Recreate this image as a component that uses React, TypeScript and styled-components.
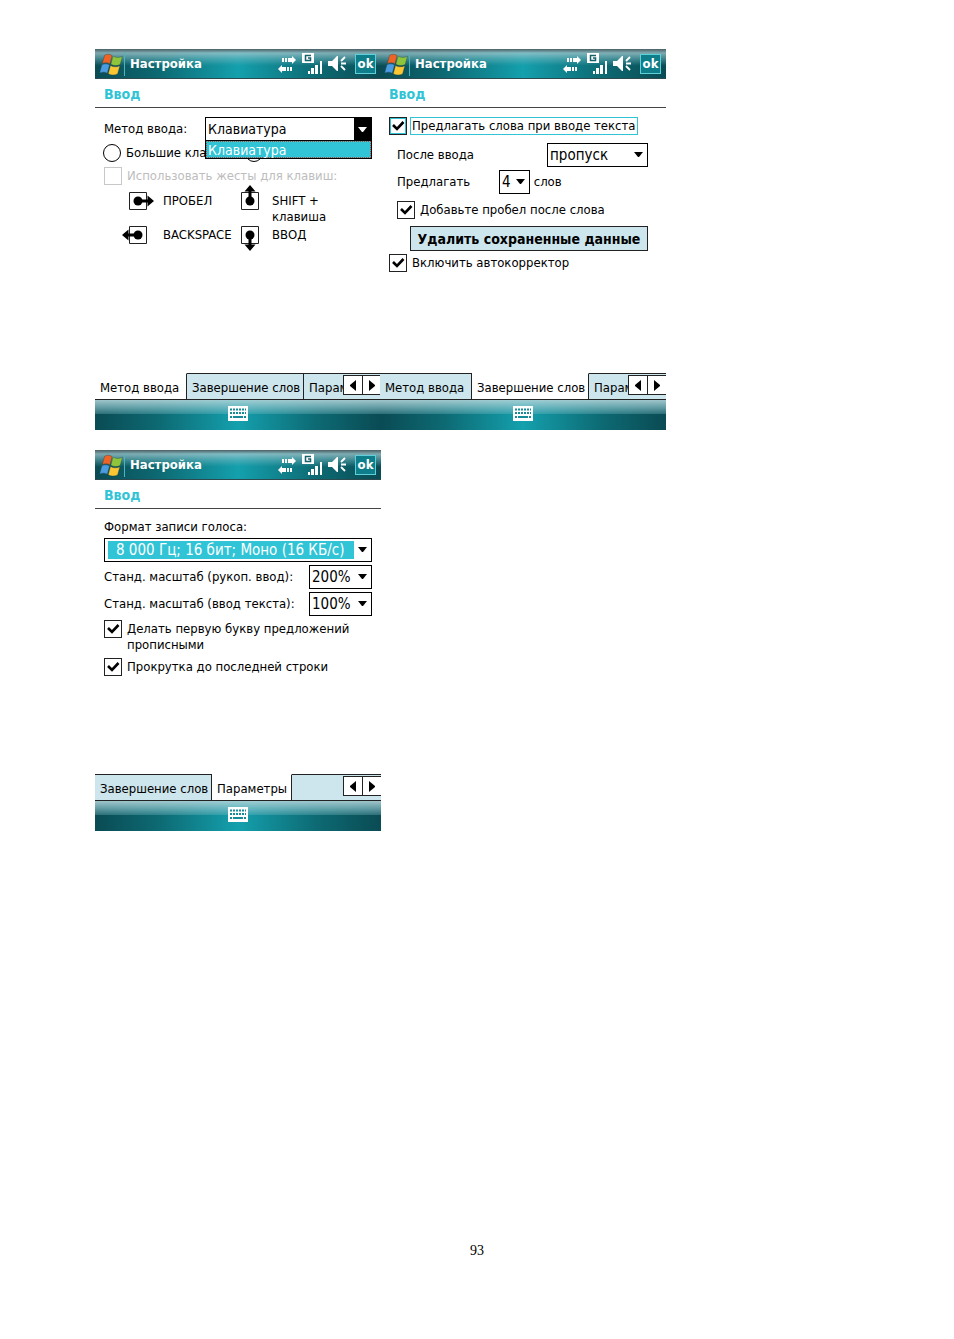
import React, { useId } from 'react';
import styled, { createGlobalStyle } from 'styled-components';

const GlobalStyle = createGlobalStyle`
  *, *::before, *::after { box-sizing: border-box; }
  body { margin: 0; background: #fff; }
  button, select, input { font: inherit; color: inherit; margin: 0; }
`;

const cyan = '#30c4d6';
const pale = '#cde5ec';
const barFill = 'linear-gradient(90deg, #0a4b54 0%, #0d6972 22%, #14a0ad 50%, #0d6972 78%, #0a4b54 100%)';
const uiFont = '"DejaVu Sans Condensed", "DejaVu Sans", sans-serif';

const Page = styled.main`
  display: flex;
  flex-direction: column;
  min-height: 100vh;
  padding: 49px 95px 79px;
  color: #000;
  font: 13px/16px ${uiFont};
`;

const Row = styled.div`
  display: flex;
  margin-bottom: 20px;
`;

const Screen = styled.section`
  display: flex;
  flex-direction: column;
  flex: 0 1 286px;
  min-width: 0;
  background: #fff;

  & + & { margin-left: -1px; }
`;

const TitleBar = styled.header`
  display: flex;
  align-items: center;
  height: 30px;
  padding: 0 5px 0 3px;
  color: #fff;
  border-bottom: 1px solid #2d4a50;
  background:
    linear-gradient(180deg, #4b6065 0%, rgba(165, 200, 206, 0.75) 14%, rgba(120, 185, 193, 0.5) 34%, rgba(90, 170, 180, 0.15) 52%, rgba(255, 255, 255, 0) 58%),
    ${barFill};
`;

const Title = styled.h1`
  flex: 1;
  margin: 0 0 0 1px;
  padding-left: 5px;
  border-left: 1px solid #4fb3bd;
  font: bold 13px/24px ${uiFont};
`;

const StatusIcons = styled.div`
  display: flex;
  align-items: center;
  gap: 6px;
  margin-right: 8px;
`;

const OkButton = styled.button`
  width: 21px;
  height: 20px;
  padding: 0;
  border: 1px solid #5fd0da;
  background: #0e7f8a;
  color: #fff;
  font-weight: bold;
  font-size: 13px;
  line-height: 16px;
`;

const Heading = styled.h2`
  height: 29px;
  margin: 0;
  padding-left: 9px;
  border-bottom: 1px solid #444;
  color: ${cyan};
  font: bold 14px/30px ${uiFont};
`;

const Body = styled.div`
  display: flex;
  flex-direction: column;
  height: 265px;
  padding: 9px 9px 0;
`;

const Line = styled.div<{ $h?: number; $indent?: number; $top?: boolean }>`
  display: flex;
  align-items: ${p => (p.$top ? 'flex-start' : 'center')};
  min-height: ${p => p.$h ?? 24}px;
  padding-left: ${p => p.$indent ?? 0}px;
  white-space: nowrap;
`;

const FieldLabel = styled.label<{ $w?: number }>`
  flex: 0 0 ${p => (p.$w ? p.$w + 'px' : 'auto')};
`;

const SelectBox = styled.span<{ $w?: number }>`
  position: relative;
  display: flex;
  flex: ${p => (p.$w ? `0 0 ${p.$w}px` : '1')};
  height: 24px;
  border: 1px solid #000;
  background: #fff;
`;

const NativeSelect = styled.select<{ $selected?: boolean; $open?: boolean }>`
  appearance: none;
  flex: 1;
  min-width: 0;
  border: 0;
  border-radius: 0;
  outline: 0;
  margin: ${p => (p.$selected ? '2px 0 2px 3px' : '0')};
  padding: 0 0 0 ${p => (p.$selected ? 8 : 2)}px;
  color: ${p => (p.$selected ? '#fff' : '#000')};
  background: ${p => (p.$selected ? cyan : 'transparent')};
  font-size: ${p => (p.$open ? 14 : 15)}px;
  line-height: 18px;
`;

const ArrowCell = styled.span<{ $open?: boolean }>`
  display: flex;
  align-items: center;
  justify-content: center;
  flex: 0 0 17px;
  color: ${p => (p.$open ? '#fff' : '#000')};
  background: ${p => (p.$open ? '#000' : 'transparent')};
  pointer-events: none;
`;

const Options = styled.ul`
  position: absolute;
  z-index: 1;
  top: 22px;
  left: -1px;
  right: -1px;
  margin: 0;
  padding: 0;
  border: 1px solid #000;
  list-style: none;
`;

const Option = styled.li`
  height: 17px;
  padding-left: 1px;
  border: 1px dotted #b0483c;
  background: ${cyan};
  color: #fff;
  font-size: 14px;
  line-height: 16px;
`;

const CheckLabel = styled.label<{ $disabled?: boolean; $framed?: boolean }>`
  display: flex;
  align-items: flex-start;
  gap: ${p => (p.$framed ? 3 : 5)}px;
  color: ${p => (p.$disabled ? '#bdbdbd' : '#000')};
  line-height: 16px;
`;

const Box = styled.span`
  position: relative;
  display: grid;
  flex: 0 0 18px;
  height: 18px;

  svg {
    position: absolute;
    inset: 0;
    pointer-events: none;
  }
  input:not(:checked) + svg { display: none; }
`;

const Tick = styled.input<{ $focus?: boolean }>`
  appearance: none;
  width: 18px;
  height: 18px;
  border: 1px solid ${p => (p.disabled ? '#c8c8c8' : '#222')};
  background: #fff;
  box-shadow: ${p => (p.$focus ? `inset 0 0 0 1px ${cyan}` : 'none')};
`;

const Radio = styled.input`
  appearance: none;
  flex: 0 0 18px;
  width: 18px;
  height: 18px;
  border: 1px solid #000;
  border-radius: 50%;
  background: #fff;
`;

const LabelText = styled.span<{ $framed?: boolean }>`
  padding: ${p => (p.$framed ? '0 1px' : '1px 0 0')};
  border: ${p => (p.$framed ? `1px solid ${cyan}` : '0')};
`;

const RadioRow = styled.div`
  display: grid;
  grid-template-columns: 102px 1fr;
  column-gap: 40px;
  align-items: center;
  height: 23px;
  margin-left: -1px;
  white-space: nowrap;
`;

const Gestures = styled.dl`
  display: grid;
  grid-template-columns: 43px 69px 40px 1fr;
  grid-template-rows: 34px 34px;
  margin: 0 0 0 16px;
`;

const GestureIcon = styled.dt`
  height: 34px;

  svg { overflow: visible; }
`;

const GestureName = styled.dd`
  margin: 0;
  padding-top: 6px;
  line-height: 16px;
  white-space: nowrap;
`;

const WideButton = styled.button`
  width: 238px;
  height: 25px;
  margin: 2px 0 0 21px;
  padding: 0;
  border: 1px solid #222;
  background: ${pale};
  font-weight: bold;
  font-size: 14px;
  line-height: 20px;
  white-space: nowrap;
`;

const TabStrip = styled.nav`
  position: relative;
  display: flex;
  height: 27px;
  overflow: hidden;
  border-bottom: 1px solid #222;
  background: ${pale};
`;

const Tab = styled.button<{ $active?: boolean; $w: number }>`
  flex: 0 0 ${p => p.$w}px;
  height: 26px;
  padding: 2px 0 0 5px;
  border: 0;
  border-top: 1px solid ${p => (p.$active ? '#fff' : '#222')};
  border-right: 1px solid #222;
  background: ${p => (p.$active ? '#fff' : pale)};
  text-align: left;
  white-space: nowrap;
`;

const TabFill = styled.span`
  flex: 1;
  border-top: 1px solid #222;
`;

const Scroller = styled.div`
  position: absolute;
  top: 2px;
  right: 0;
  display: flex;
`;

const ScrollButton = styled.button`
  display: grid;
  place-items: center;
  width: 20px;
  height: 20px;
  padding: 0;
  border: 1px solid #222;
  background: #fff;

  & + & { width: 19px; margin-left: -1px; border-right: 0; }
`;

const BottomBar = styled.footer`
  display: flex;
  align-items: flex-start;
  justify-content: center;
  height: 30px;
  padding-top: 6px;
  background:
    linear-gradient(180deg, rgba(175, 210, 215, 0.9) 0%, rgba(150, 200, 207, 0.65) 24%, rgba(120, 185, 193, 0.35) 45%, rgba(255, 255, 255, 0) 46%),
    ${barFill};
`;

const KeyboardButton = styled.button`
  display: block;
  width: 20px;
  height: 15px;
  padding: 0;
  border: 0;
  background: none;
`;

const PageNumber = styled.footer`
  margin-top: auto;
  text-align: center;
  font: 14px/18px "Liberation Serif", serif;
`;

const Flag = () => (
  <svg width="25" height="26" viewBox="1 1 21 22" aria-hidden="true">
    <g stroke="#16363c" strokeOpacity=".45" strokeWidth=".6">
      <path d="M6.500 4.600c2.200-1.200 4.500-1.100 6.300.3l-1.800 7c-2-1.300-4.100-1.300-6.500-.2z" fill="#ef6327" />
      <path d="M13.600 5.300c2.600 1.500 5 1.500 8 .1l-1.900 7c-2.700 1.300-5.300 1.200-7.900-.2z" fill="#8fc53b" />
      <path d="M4.200 12.700c2.300-1.200 4.500-1 6.500.2l-1.900 7c-1.900-1.300-4-1.300-6.500-.2z" fill="#4b9be0" />
      <path d="M11.500 13.300c2.600 1.500 5 1.400 7.900.1l-1.900 7c-2.700 1.400-5.300 1.200-7.900-.1z" fill="#fbc632" />
    </g>
  </svg>
);

const SyncIcon = () => (
  <svg width="18" height="18" viewBox="0 -2 18 18" fill="#fff" aria-hidden="true">
    <path d="M4 1h2v4H4zM7 1h2v4H7zM10 1h4v-2l4 4-4 4V5h-4z" />
    <path d="M14 10h-2v4h2zM11 10H9v4h2zM8 10H4V8l-4 4 4 4v-2h4z" />
  </svg>
);

const SignalIcon = () => (
  <svg width="20" height="21" viewBox="0 0 20 21" aria-hidden="true">
    <path d="M0 0h12v10H0z" fill="#fff" />
    <path d="M9 2.500H3.500v5H8.500V5H6" fill="none" stroke="#17616b" strokeWidth="1.500" />
    <path d="M6 18h2v3H6zM9 15h3v6H9zM13 12h3v9h-3zM18 8h2v13h-2z" fill="#fff" />
  </svg>
);

const SpeakerIcon = () => (
  <svg width="19" height="17" viewBox="0 0 19 17" aria-hidden="true">
    <path d="M0 6h4l5-5h1v15H9l-5-5H0z" fill="#fff" />
    <path d="M13 6l4-4M13 8.500h5M13 11l4 4" stroke="#fff" strokeWidth="1.800" />
  </svg>
);

const DownArrow = () => (
  <svg width="9" height="5" viewBox="0 0 9 5" fill="currentColor" aria-hidden="true">
    <path d="M0 0h9L5 5H4z" />
  </svg>
);

const SideArrow = ({ left }: { left?: boolean }) => (
  <svg width="6" height="11" viewBox="0 0 6 11" aria-hidden="true">
    <path d={left ? 'M6 0v11L0 6V5z' : 'M0 0v11l6-5V5z'} />
  </svg>
);

const KeyboardIcon = () => (
  <svg width="20" height="15" viewBox="0 0 20 15" aria-hidden="true">
    <path d="M0 0h20v15H0z" fill="#fff" />
    <path d="M2 3.500h16M2 7h16" stroke="#168b97" strokeWidth="2" strokeDasharray="2 1" />
    <path d="M2 11h2M5 11h10M16 11h2" stroke="#168b97" strokeWidth="2" />
  </svg>
);

const rotations = { right: 0, down: 90, left: 180, up: 270 };

const GestureGlyph = ({ dir }: { dir: keyof typeof rotations }) => (
  <svg width="36" height="28" viewBox="0 3 36 28" aria-hidden="true">
    <path d="M9.500 8.500h17v17h-17z" fill="#fff" stroke="#222" />
    <g transform={`rotate(${rotations[dir]} 18 17)`}>
      <circle cx="18" cy="17" r="4.500" />
      <path d="M18 15.500h9.500V11.500L34 17l-6.500 5.500V18.500H18z" />
    </g>
  </svg>
);

const CheckMark = () => (
  <svg width="18" height="18" viewBox="0 0 18 18" aria-hidden="true">
    <path d="M4 8l4 4 6.500-7" fill="none" stroke="#000" strokeWidth="2.600" />
  </svg>
);

type CheckProps = {
  children: React.ReactNode;
  checked?: boolean;
  disabled?: boolean;
  framed?: boolean;
};

const Check = ({ children, checked, disabled, framed }: CheckProps) => (
  <CheckLabel $disabled={disabled} $framed={framed}>
    <Box>
      <Tick type="checkbox" defaultChecked={checked} disabled={disabled} $focus={framed} />
      <CheckMark />
    </Box>
    <LabelText $framed={framed}>{children}</LabelText>
  </CheckLabel>
);

type SelectProps = { id: string; value: string; width?: number; open?: boolean; selected?: boolean };

const Select = ({ id, value, width, open, selected }: SelectProps) => (
  <SelectBox $w={width}>
    <NativeSelect id={id} $selected={selected} $open={open}>
      <option>{value}</option>
    </NativeSelect>
    <ArrowCell $open={open}><DownArrow /></ArrowCell>
    {open && (
      <Options role="listbox">
        <Option role="option" aria-selected="true">{value}</Option>
      </Options>
    )}
  </SelectBox>
);

type TabInfo = { name: string; width: number; active?: boolean };

const Device = ({ tabs, fill, children }: { tabs: TabInfo[]; fill?: boolean; children: React.ReactNode }) => (
  <Screen>
    <TitleBar>
      <Flag />
      <Title>Настройка</Title>
      <StatusIcons>
        <SyncIcon />
        <SignalIcon />
        <SpeakerIcon />
      </StatusIcons>
      <OkButton>ok</OkButton>
    </TitleBar>
    <Heading>Ввод</Heading>
    <Body>{children}</Body>
    <TabStrip>
      {tabs.map(t => (
        <Tab key={t.name} $w={t.width} $active={t.active}>{t.name}</Tab>
      ))}
      {fill && <TabFill />}
      <Scroller>
        <ScrollButton aria-label="Назад"><SideArrow left /></ScrollButton>
        <ScrollButton aria-label="Вперед"><SideArrow /></ScrollButton>
      </Scroller>
    </TabStrip>
    <BottomBar>
      <KeyboardButton aria-label="Клавиатура"><KeyboardIcon /></KeyboardButton>
    </BottomBar>
  </Screen>
);

const InputMethod = () => {
  const id = useId();
  return (
    <Device tabs={[
      { name: 'Метод ввода', width: 92, active: true },
      { name: 'Завершение слов', width: 117 },
      { name: 'Параметры', width: 80 },
    ]}>
      <Line>
        <FieldLabel htmlFor={id} $w={101}>Метод ввода:</FieldLabel>
        <Select id={id} value="Клавиатура" open />
      </Line>
      <RadioRow>
        <CheckLabel>
          <Radio type="radio" name="keys" />
          <LabelText>Большие кла</LabelText>
        </CheckLabel>
        <Radio type="radio" name="keys" aria-label="Маленькие клавиши" />
      </RadioRow>
      <Line $h={23}><Check disabled>Использовать жесты для клавиш:</Check></Line>
      <Gestures>
        <GestureIcon><GestureGlyph dir="right" /></GestureIcon>
        <GestureName>ПРОБЕЛ</GestureName>
        <GestureIcon><GestureGlyph dir="up" /></GestureIcon>
        <GestureName>SHIFT +<br />клавиша</GestureName>
        <GestureIcon><GestureGlyph dir="left" /></GestureIcon>
        <GestureName>BACKSPACE</GestureName>
        <GestureIcon><GestureGlyph dir="down" /></GestureIcon>
        <GestureName>ВВОД</GestureName>
      </Gestures>
    </Device>
  );
};

const WordCompletion = () => {
  const after = useId();
  const count = useId();
  return (
    <Device tabs={[
      { name: 'Метод ввода', width: 92 },
      { name: 'Завершение слов', width: 117, active: true },
      { name: 'Параметры', width: 80 },
    ]}>
      <Line $top><Check checked framed>Предлагать слова при вводе текста</Check></Line>
      <Line $h={27} $indent={8}>
        <FieldLabel htmlFor={after} $w={150}>После ввода</FieldLabel>
        <Select id={after} value="пропуск" width={101} />
      </Line>
      <Line $h={27} $indent={8}>
        <FieldLabel htmlFor={count} $w={102}>Предлагать</FieldLabel>
        <Select id={count} value="4" width={31} />
        &nbsp;слов
      </Line>
      <Line $h={29} $indent={8}><Check checked>Добавьте пробел после слова</Check></Line>
      <WideButton>Удалить сохраненные данные</WideButton>
      <Line><Check checked>Включить автокорректор</Check></Line>
    </Device>
  );
};

const Parameters = () => {
  const format = useId();
  const pen = useId();
  const text = useId();
  return (
    <Device fill tabs={[
      { name: 'Завершение слов', width: 117 },
      { name: 'Параметры', width: 80, active: true },
    ]}>
      <Line $h={18}><FieldLabel htmlFor={format}>Формат записи голоса:</FieldLabel></Line>
      <Line $h={27}><Select id={format} value="8 000 Гц; 16 бит; Моно (16 КБ/с)" selected /></Line>
      <Line $h={27}>
        <FieldLabel htmlFor={pen} $w={205}>Станд. масштаб (рукоп. ввод):</FieldLabel>
        <Select id={pen} value="200%" />
      </Line>
      <Line $h={27}>
        <FieldLabel htmlFor={text} $w={205}>Станд. масштаб (ввод текста):</FieldLabel>
        <Select id={text} value="100%" />
      </Line>
      <Line $h={38}><Check checked>Делать первую букву предложений<br />прописными</Check></Line>
      <Line><Check checked>Прокрутка до последней строки</Check></Line>
    </Device>
  );
};

export default function App() {
  return (
    <>
      <GlobalStyle />
      <Page>
        <Row>
          <InputMethod />
          <WordCompletion />
        </Row>
        <Row>
          <Parameters />
        </Row>
        <PageNumber>93</PageNumber>
      </Page>
    </>
  );
}
